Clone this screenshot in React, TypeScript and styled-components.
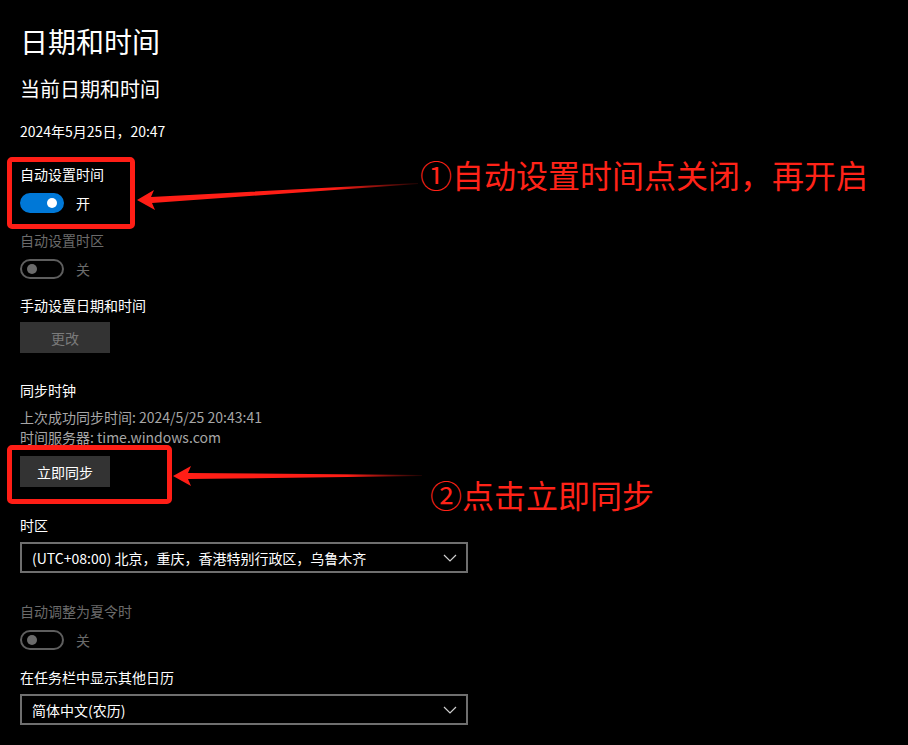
import React from "react";
import styled, { createGlobalStyle } from "styled-components";

const GlobalStyle = createGlobalStyle`
  html, body {
    margin: 0;
    padding: 0;
    background: #000;
  }
  body {
    font-family: "Noto Sans CJK SC", "Noto Sans", sans-serif;
    color: #fff;
  }
`;

const Page = styled.div`
  position: relative;
  width: 908px;
  height: 745px;
  overflow: hidden;
  background: #000;
  padding: 21px 0 0 20px;
  box-sizing: border-box;
`;

const Title = styled.h1`
  margin: 0;
  font-size: 28px;
  font-weight: 400;
  line-height: 40px;
`;

const SubTitle = styled.h2`
  margin: 14px 0 0;
  font-size: 20px;
  font-weight: 400;
  line-height: 28px;
`;

const Text = styled.div<{ $gap?: number; $tone?: "normal" | "muted" | "disabled" }>`
  margin-top: ${({ $gap }) => $gap ?? 0}px;
  font-size: 14px;
  line-height: 20px;
  color: ${({ $tone }) =>
    $tone === "disabled" ? "#6b6b6b" : $tone === "muted" ? "#a6a6a6" : "#fff"};
`;

const ToggleRow = styled.div`
  margin-top: 9px;
  display: flex;
  align-items: center;
  gap: 12px;
  height: 20px;
`;

const Track = styled.div<{ $on: boolean }>`
  width: 44px;
  height: 20px;
  box-sizing: border-box;
  border-radius: 10px;
  display: flex;
  align-items: center;
  padding: 0 5px;
  justify-content: ${({ $on }) => ($on ? "flex-end" : "flex-start")};
  background: ${({ $on }) => ($on ? "#0078d7" : "transparent")};
  border: 2px solid ${({ $on }) => ($on ? "#0078d7" : "#5e5e5e")};
`;

const Knob = styled.div<{ $on: boolean }>`
  width: 10px;
  height: 10px;
  border-radius: 50%;
  background: ${({ $on }) => ($on ? "#fff" : "#6b6b6b")};
`;

const ToggleLabel = styled.span<{ $on: boolean }>`
  font-size: 14px;
  color: ${({ $on }) => ($on ? "#fff" : "#6b6b6b")};
`;

const Button = styled.div<{ $disabled?: boolean }>`
  margin-top: ${({ $disabled }) => ($disabled ? 7 : 9)}px;
  width: 90px;
  height: 31px;
  display: flex;
  align-items: center;
  justify-content: center;
  background: #333;
  font-size: 14px;
  color: ${({ $disabled }) => ($disabled ? "#7a7a7a" : "#fff")};
`;

const Select = styled.div`
  margin-top: 7px;
  width: 448px;
  height: 31px;
  box-sizing: border-box;
  border: 2px solid #6f6f6f;
  display: flex;
  align-items: center;
  justify-content: space-between;
  padding: 0 9px 0 10px;
  font-size: 14px;
`;

const Highlight = styled.div<{ $x: number; $y: number; $w: number; $h: number }>`
  position: absolute;
  left: ${({ $x }) => $x}px;
  top: ${({ $y }) => $y}px;
  width: ${({ $w }) => $w}px;
  height: ${({ $h }) => $h}px;
  box-sizing: border-box;
  border: 5px solid #ff1e16;
  border-radius: 5px;
`;

const Note = styled.div<{ $x: number; $y: number }>`
  position: absolute;
  left: ${({ $x }) => $x}px;
  top: ${({ $y }) => $y}px;
  font-size: 32px;
  line-height: 40px;
  color: #ff2318;
  white-space: nowrap;
`;

const Arrows = styled.svg`
  position: absolute;
  left: 0;
  top: 0;
  pointer-events: none;
`;

function Toggle({ on }: { on: boolean }) {
  return (
    <ToggleRow>
      <Track $on={on}>
        <Knob $on={on} />
      </Track>
      <ToggleLabel $on={on}>{on ? "开" : "关"}</ToggleLabel>
    </ToggleRow>
  );
}

function Chevron() {
  return (
    <svg width="14" height="8" viewBox="0 0 14 8">
      <polyline points="1,1 7,7 13,1" fill="none" stroke="#cfcfcf" strokeWidth="1.2" />
    </svg>
  );
}

export default function App() {
  return (
    <>
      <GlobalStyle />
      <Page>
        <Title>日期和时间</Title>
        <SubTitle>当前日期和时间</SubTitle>
        <Text $gap={18}>2024年5月25日，20:47</Text>

        <Text $gap={23}>自动设置时间</Text>
        <Toggle on />

        <Text $gap={17} $tone="disabled">自动设置时区</Text>
        <Toggle on={false} />

        <Text $gap={16}>手动设置日期和时间</Text>
        <Button $disabled>更改</Button>

        <Text $gap={27}>同步时钟</Text>
        <Text $gap={7} $tone="muted">上次成功同步时间: 2024/5/25 20:43:41</Text>
        <Text $tone="muted">时间服务器: time.windows.com</Text>
        <Button>立即同步</Button>

        <Text $gap={28}>时区</Text>
        <Select>
          <span>(UTC+08:00) 北京，重庆，香港特别行政区，乌鲁木齐</span>
          <Chevron />
        </Select>

        <Text $gap={28} $tone="disabled">自动调整为夏令时</Text>
        <Toggle on={false} />

        <Text $gap={17}>在任务栏中显示其他日历</Text>
        <Select>
          <span>简体中文(农历)</span>
          <Chevron />
        </Select>

        <Highlight $x={7} $y={157} $w={128} $h={72} />
        <Highlight $x={7} $y={445} $w={165} $h={59} />

        <Arrows width="908" height="745" viewBox="0 0 908 745">
          <defs>
            <linearGradient id="fade1" x1="137" y1="0" x2="420" y2="0" gradientUnits="userSpaceOnUse">
              <stop offset="0.7" stopColor="#ff1e16" />
              <stop offset="1" stopColor="#ff1e16" stopOpacity="0.1" />
            </linearGradient>
            <linearGradient id="fade2" x1="173" y1="0" x2="422" y2="0" gradientUnits="userSpaceOnUse">
              <stop offset="0.7" stopColor="#ff1e16" />
              <stop offset="1" stopColor="#ff1e16" stopOpacity="0.1" />
            </linearGradient>
          </defs>
          <polygon points="137,200 154,190 151,197 418,183 418,184 152,203 155,210" fill="url(#fade1)" />
          <polygon points="173,476 191,466 188,473 422,475 422,476 188,479 191,486" fill="url(#fade2)" />
        </Arrows>

        <Note $x={420} $y={154}>①自动设置时间点关闭，再开启</Note>
        <Note $x={430} $y={474}>②点击立即同步</Note>
      </Page>
    </>
  );
}
